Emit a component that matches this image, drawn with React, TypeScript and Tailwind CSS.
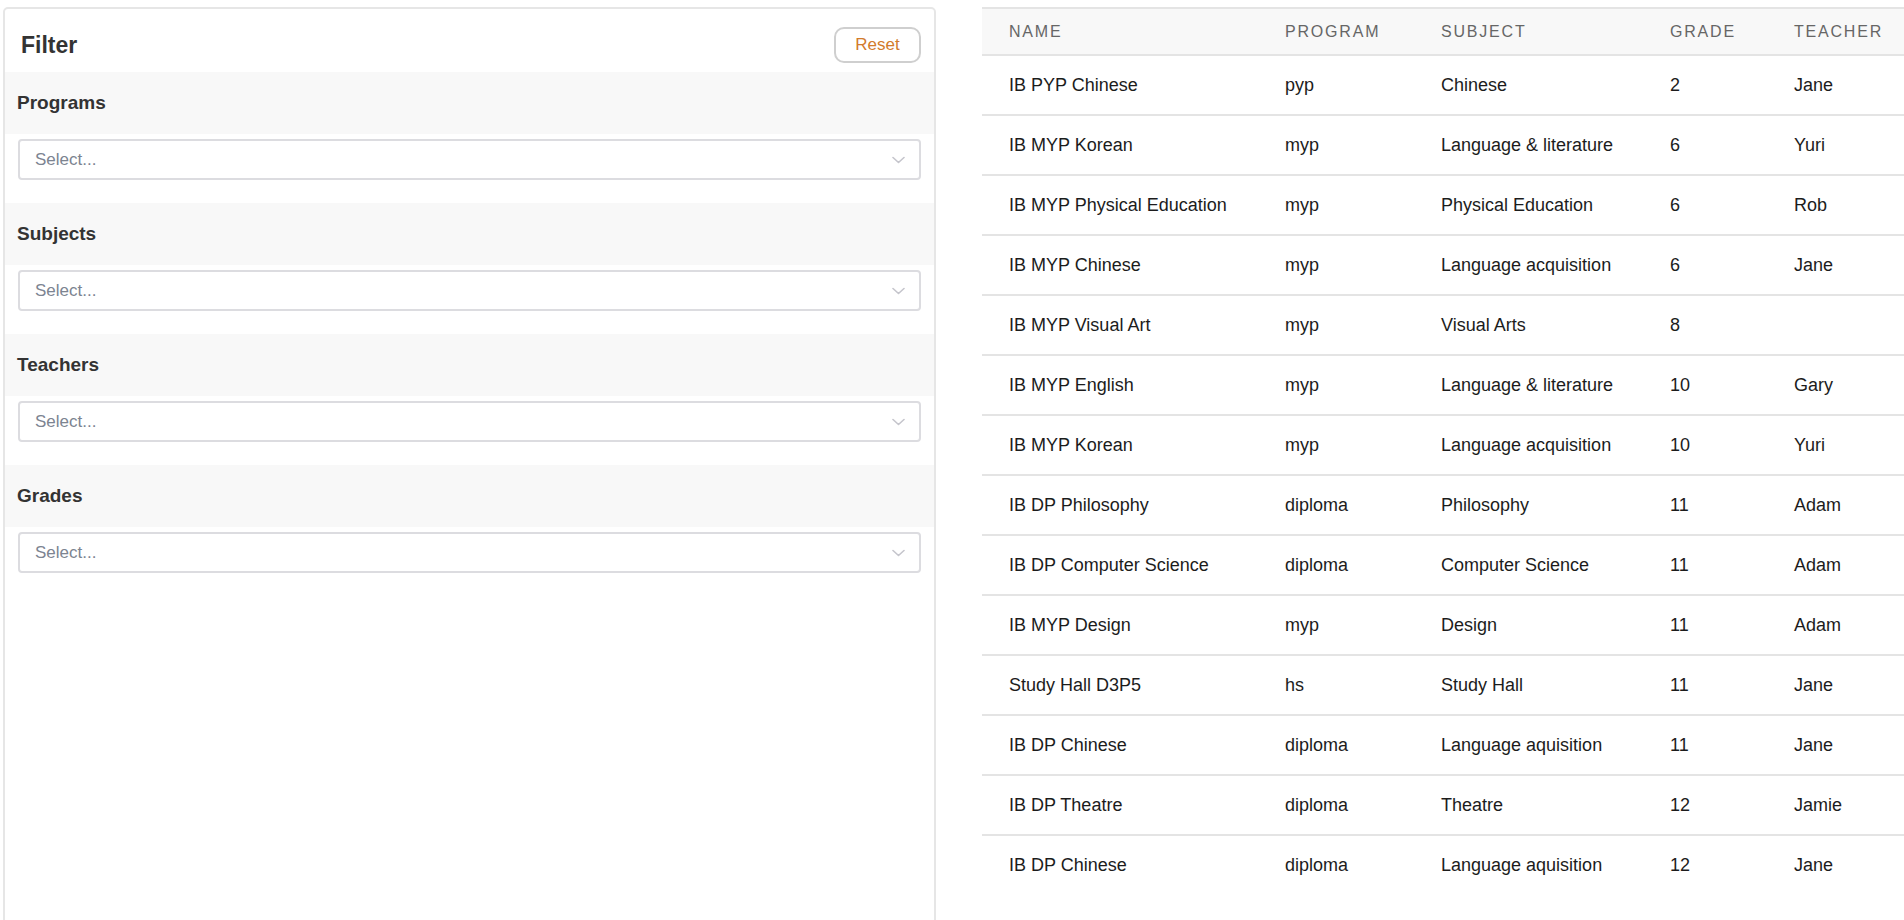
import React from 'react';

const sections = ['Programs', 'Subjects', 'Teachers', 'Grades'];

const rows = [
  ['IB PYP Chinese', 'pyp', 'Chinese', '2', 'Jane'],
  ['IB MYP Korean', 'myp', 'Language & literature', '6', 'Yuri'],
  ['IB MYP Physical Education', 'myp', 'Physical Education', '6', 'Rob'],
  ['IB MYP Chinese', 'myp', 'Language acquisition', '6', 'Jane'],
  ['IB MYP Visual Art', 'myp', 'Visual Arts', '8', ''],
  ['IB MYP English', 'myp', 'Language & literature', '10', 'Gary'],
  ['IB MYP Korean', 'myp', 'Language acquisition', '10', 'Yuri'],
  ['IB DP Philosophy', 'diploma', 'Philosophy', '11', 'Adam'],
  ['IB DP Computer Science', 'diploma', 'Computer Science', '11', 'Adam'],
  ['IB MYP Design', 'myp', 'Design', '11', 'Adam'],
  ['Study Hall D3P5', 'hs', 'Study Hall', '11', 'Jane'],
  ['IB DP Chinese', 'diploma', 'Language aquisition', '11', 'Jane'],
  ['IB DP Theatre', 'diploma', 'Theatre', '12', 'Jamie'],
  ['IB DP Chinese', 'diploma', 'Language aquisition', '12', 'Jane'],
];

const columns = [
  { label: 'Name', width: 'w-[276px]' },
  { label: 'Program', width: 'w-[156px]' },
  { label: 'Subject', width: 'w-[229px]' },
  { label: 'Grade', width: 'w-[124px]' },
  { label: 'Teacher', width: 'w-[137px]' },
];

const Chevron = () => (
  <svg width="13" height="8" viewBox="0 0 13 8" fill="none">
    <path d="M1 1.5 L6.5 6.5 L12 1.5" stroke="#c5c5cc" strokeWidth="1.6" strokeLinecap="round" strokeLinejoin="round" />
  </svg>
);

const SelectBox: React.FC = () => (
  <div className="flex h-[41px] items-center justify-between rounded-[4px] border-2 border-[#dcdce0] bg-white pl-[15px] pr-[14px]">
    <span className="text-[17px] text-[#7c8491]">Select...</span>
    <Chevron />
  </div>
);

const FilterPanel: React.FC = () => (
  <div className="h-[940px] w-[933px] shrink-0 rounded-[5px] border-2 border-[#e6e6e6] bg-white">
    <div className="flex items-center justify-between pb-[9px] pl-[16px] pr-[13px] pt-[18px]">
      <h2 className="text-[23px] font-bold text-[#333]">Filter</h2>
      <button className="h-[36px] w-[87px] rounded-[10px] border-2 border-[#cfcfcf] bg-white text-[17px] text-[#d27b2c]">
        Reset
      </button>
    </div>
    {sections.map((s) => (
      <div key={s} className="mb-[23px]">
        <div className="flex h-[62px] items-center bg-[#f8f8f8] px-[12px]">
          <h3 className="text-[19px] font-bold text-[#333]">{s}</h3>
        </div>
        <div className="mt-[5px] px-[13px]">
          <SelectBox />
        </div>
      </div>
    ))}
  </div>
);

const ClassTable: React.FC = () => (
  <table className="w-[922px] shrink-0 table-fixed border-collapse">
    <thead>
      <tr className="h-[47px] border-y-2 border-[#e4e4e4] bg-[#f8f8f8]">
        {columns.map((c) => (
          <th
            key={c.label}
            className={`${c.width} pl-[27px] text-left text-[16px] font-normal uppercase tracking-[1.8px] text-[#666]`}
          >
            {c.label}
          </th>
        ))}
      </tr>
    </thead>
    <tbody>
      {rows.map((r, i) => (
        <tr key={i} className={`h-[60px] ${i < rows.length - 1 ? 'border-b-2 border-[#e4e4e4]' : ''}`}>
          {r.map((cell, j) => (
            <td key={j} className="whitespace-nowrap pl-[27px] text-[18px] text-[#1c1c1c]">
              {cell}
            </td>
          ))}
        </tr>
      ))}
    </tbody>
  </table>
);

export default function App() {
  return (
    <div className="flex h-[920px] items-start gap-[46px] overflow-hidden bg-white pl-[3px] pt-[7px] font-['Liberation_Sans',Arial,sans-serif]">
      <FilterPanel />
      <ClassTable />
    </div>
  );
}
